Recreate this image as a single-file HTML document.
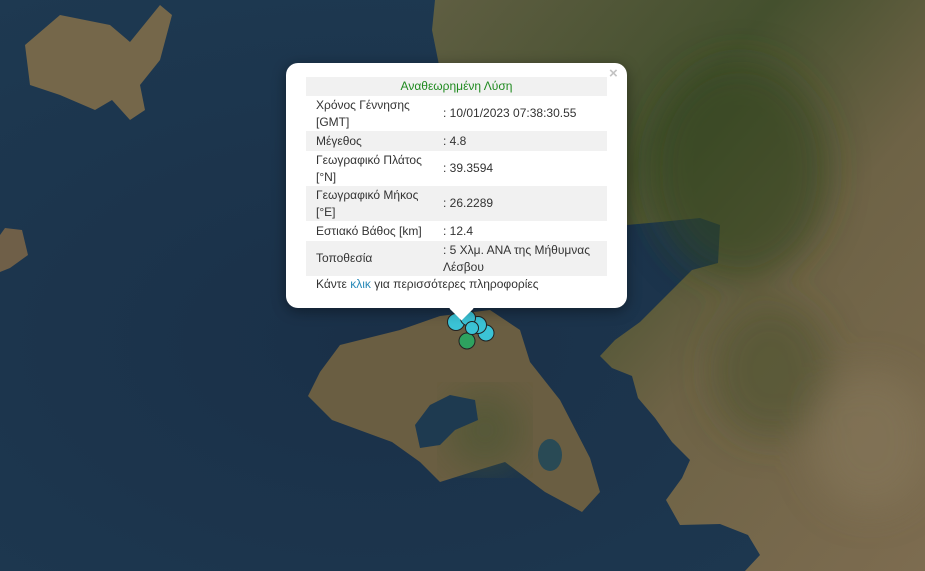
<!DOCTYPE html>
<html><head><meta charset="utf-8"><style>
html,body{margin:0;padding:0;width:925px;height:571px;overflow:hidden;background:#1b344b;font-family:"Liberation Sans",Arial,sans-serif}
svg.map{position:absolute;left:0;top:0}
.pop{position:absolute;left:286px;top:63px;width:341px;height:245px;background:#fff;border-radius:12px;box-shadow:0 3px 14px rgba(0,0,0,.4)}
.tip{position:absolute;left:453px;top:300px;width:17px;height:17px;background:#fff;transform:rotate(45deg)}
.x{position:absolute;left:609px;top:65px;color:#c3c3c3;font:bold 15px "Liberation Sans",sans-serif}
table{position:absolute;left:306px;top:77px;width:301px;border-collapse:collapse;font-size:12px;color:#333;line-height:17px}
td{padding:0 0 0 10px;vertical-align:middle}
tr.g{background:#f1f1f1}
.h td{text-align:center;color:#1f8a1f;height:19px;padding:0}
.f{position:absolute;left:316px;top:277px;font-size:12px;color:#333}
.f span{color:#2a8ab8}
</style></head><body>
<svg class="map" width="925" height="571" viewBox="0 0 925 571">
<defs>
<radialGradient id="sea" cx="0.4" cy="0.6" r="0.8"><stop offset="0" stop-color="#1a3048"/><stop offset="1" stop-color="#1e3a52"/></radialGradient>
<linearGradient id="tk" x1="0" y1="0" x2="1" y2="1"><stop offset="0" stop-color="#5f5e42"/><stop offset="0.35" stop-color="#44502e"/><stop offset="0.6" stop-color="#6e6346"/><stop offset="1" stop-color="#7d6c50"/></linearGradient>
<filter id="bl"><feGaussianBlur stdDeviation="18"/></filter>
</defs>
<rect width="925" height="571" fill="url(#sea)"/>
<path fill="url(#tk)" d="M435,0 L925,0 L925,571 L745,571 L760,555 L748,535 L720,524 L680,525 L666,500 L682,478 L690,460 L672,442 L655,418 L638,398 L632,376 L612,368 L600,356 L615,340 L640,322 L662,300 L692,270 L718,263 L720,225 L700,218 L660,222 L627,225 L627,100 L440,70 L432,30 Z"/>
<g filter="url(#bl)">
<ellipse cx="740" cy="170" rx="90" ry="110" fill="#33441f" opacity=".6"/>
<ellipse cx="770" cy="370" rx="60" ry="70" fill="#45502c" opacity=".5"/>
<ellipse cx="870" cy="440" rx="60" ry="70" fill="#8a7a5e" opacity=".5"/>
</g>
<path fill="#6a5e42" d="M320,372 L340,345 L400,330 L440,316 L490,310 L520,330 L530,362 L560,400 L590,458 L600,492 L582,512 L545,492 L505,462 L472,472 L440,482 L420,462 L392,442 L332,420 L308,396 Z"/>
<ellipse cx="485" cy="430" rx="40" ry="40" fill="#4a5530" opacity=".6" filter="url(#bl)"/>
<path fill="#1e3a50" d="M430,405 L450,395 L475,400 L478,420 L455,430 L440,445 L420,448 L415,425 Z"/>
<ellipse cx="550" cy="455" rx="12" ry="16" fill="#294a55"/>
<path fill="#75674a" d="M25,45 L60,15 L110,25 L130,42 L160,5 L172,15 L160,60 L140,85 L145,110 L130,120 L112,100 L95,110 L60,95 L30,85 Z"/>
<path fill="#6f5f48" d="M5,228 L22,230 L28,255 L10,268 L0,272 L0,235 Z"/>
<g stroke="#222" stroke-width="1">
<circle cx="467" cy="341" r="8" fill="#2ea25f"/>
<circle cx="486" cy="333" r="8" fill="#3bc3d6"/>
<circle cx="456" cy="322" r="8.5" fill="#3bc3d6"/>
<circle cx="478" cy="325" r="8.5" fill="#3bc3d6"/>
<circle cx="468" cy="318" r="7.5" fill="#3bc3d6"/>
<circle cx="472" cy="328" r="6.5" fill="#3bc3d6"/>
</g>
</svg>
<div class="pop"></div><div class="tip"></div>
<div class="x">×</div>
<table>
<tr class="g h"><td colspan="2">Αναθεωρημένη Λύση</td></tr>
<tr style="height:35px"><td style="width:127px">Χρόνος Γέννησης<br>[GMT]</td><td style="padding-left:0">: 10/01/2023 07:38:30.55</td></tr>
<tr class="g" style="height:20px"><td>Μέγεθος</td><td style="padding-left:0">: 4.8</td></tr>
<tr style="height:35px"><td>Γεωγραφικό Πλάτος<br>[°N]</td><td style="padding-left:0">: 39.3594</td></tr>
<tr class="g" style="height:35px"><td>Γεωγραφικό Μήκος<br>[°E]</td><td style="padding-left:0">: 26.2289</td></tr>
<tr style="height:20px"><td>Εστιακό Βάθος [km]</td><td style="padding-left:0">: 12.4</td></tr>
<tr class="g" style="height:35px"><td>Τοποθεσία</td><td style="padding-left:0">: 5 Χλμ. ΑΝΑ της Μήθυμνας<br>Λέσβου</td></tr>
</table>
<div class="f">Κάντε <span>κλικ</span> για περισσότερες πληροφορίες</div>
</body></html>
